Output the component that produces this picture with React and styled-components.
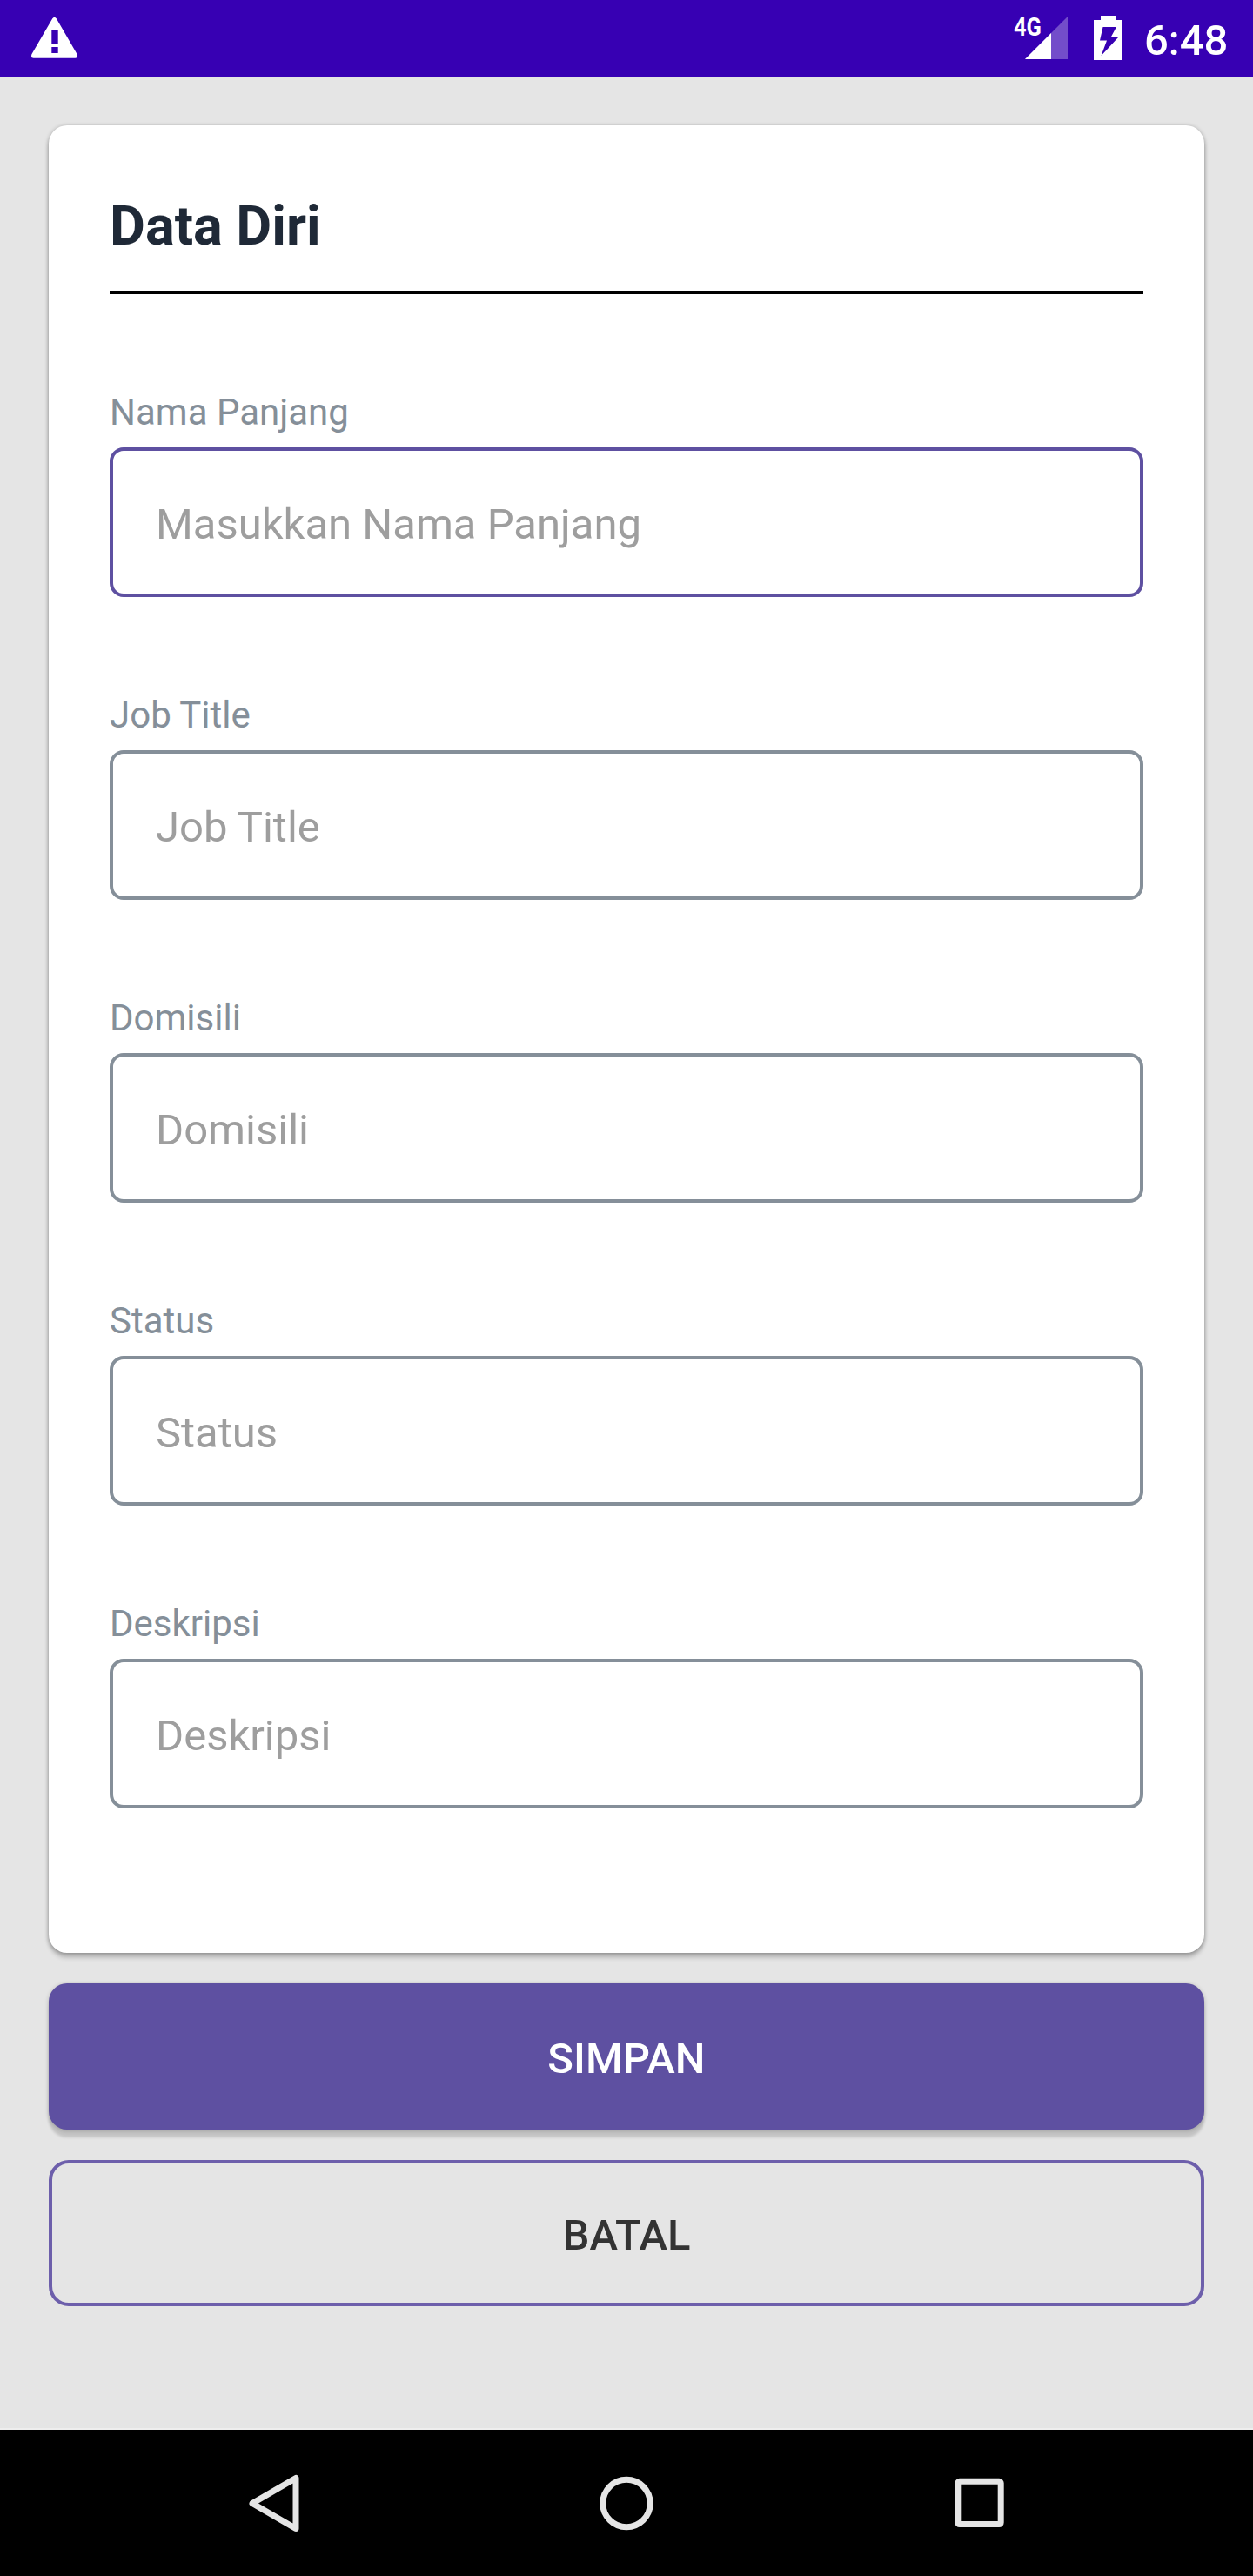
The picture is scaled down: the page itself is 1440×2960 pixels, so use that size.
import React from "react";
import styled, { createGlobalStyle } from "styled-components";

const GlobalStyle = createGlobalStyle`
  *, *::before, *::after { box-sizing: border-box; }
  body { margin: 0; background: #e5e5e5; font-family: Roboto, "Noto Sans", sans-serif; }
`;

const Screen = styled.div`
  display: flex;
  flex-direction: column;
  width: 1440px;
  height: 2960px;
  background: #e5e5e5;
`;

const StatusBar = styled.header`
  display: flex;
  justify-content: space-between;
  align-items: flex-start;
  height: 88px;
  padding: 0 28px 0 36px;
  background: #3700b3;
  color: #fff;
`;

const WarningIcon = styled.svg`
  display: block;
  margin-top: 19px;
`;

const StatusIcons = styled.div`
  display: flex;
  align-items: flex-start;
`;

const NetworkLabel = styled.span`
  width: 30px;
  margin: 17px -17px 0 0;
  font-size: 29.5px;
  line-height: 28px;
  font-weight: 700;
  white-space: nowrap;
  transform: scaleX(0.86);
  transform-origin: left;
`;

const SignalIcon = styled.svg`
  display: block;
  margin: 19px 30px 0 0;
`;

const BatteryIcon = styled.svg`
  display: block;
  margin: 18px 25px 0 0;
`;

const Clock = styled.time`
  width: 97px;
  height: 88px;
  font-size: 49px;
  line-height: 93px;
  font-weight: 500;
  white-space: nowrap;
`;

const Content = styled.main`
  display: flex;
  flex-direction: column;
  gap: 35px;
  flex: 1;
  padding: 56px 56px 0;
  border-bottom: 2px solid #eee;
`;

const Card = styled.section`
  height: 2100px;
  padding: 70px;
  border-radius: 21px;
  background: #fff;
  box-shadow: 0 6px 5px rgba(0, 0, 0, 0.16), 0 1px 5px rgba(0, 0, 0, 0.32);
`;

const Title = styled.h1`
  height: 124px;
  margin: 0 0 104px;
  border-bottom: 4px solid #000;
  font-size: 63px;
  line-height: 91px;
  font-weight: 700;
  color: #1f2937;
`;

const Fields = styled.form`
  display: flex;
  flex-direction: column;
  gap: 104px;
`;

const Field = styled.label`
  display: flex;
  flex-direction: column;
`;

const FieldLabel = styled.span`
  height: 72px;
  font-size: 42px;
  line-height: 63px;
  color: #858f99;
`;

const TextInput = styled.input`
  height: 172px;
  padding: 5px 49px 0;
  border: 4px solid ${(p) => (p.$active ? "#5e50a1" : "#858f99")};
  border-radius: 16px;
  outline: none;
  background: transparent;
  font-family: inherit;
  font-size: 49px;
  color: #333;
  &::placeholder { color: #9e9e9e; opacity: 1; }
`;

const Button = styled.button`
  flex: none;
  height: 168px;
  padding: 5px 0 0;
  border: ${(p) => (p.$outlined ? "4px solid #6d5fab" : "0")};
  border-radius: ${(p) => (p.$outlined ? "23px" : "21px")};
  background: ${(p) => (p.$outlined ? "transparent" : "#5e50a1")};
  box-shadow: ${(p) =>
    p.$outlined ? "none" : "0 9px 3px rgba(0, 0, 0, 0.14), 0 1px 5px rgba(0, 0, 0, 0.22)"};
  font-family: inherit;
  font-size: 49px;
  font-weight: 500;
  color: ${(p) => (p.$outlined ? "#333" : "#fff")};
`;

const NavBar = styled.nav`
  display: flex;
  justify-content: space-between;
  align-items: center;
  height: 168px;
  padding: 0 275px;
  background: #000;
`;

const NavIcon = styled.svg`
  display: block;
  width: 80px;
  height: 80px;
  fill: none;
  stroke: #e5e5e5;
  stroke-width: 7;
  stroke-linejoin: round;
`;

const FIELDS = [
  { label: "Nama Panjang", placeholder: "Masukkan Nama Panjang", active: true },
  { label: "Job Title", placeholder: "Job Title" },
  { label: "Domisili", placeholder: "Domisili" },
  { label: "Status", placeholder: "Status" },
  { label: "Deskripsi", placeholder: "Deskripsi" },
];

export default function App() {
  return (
    <Screen>
      <GlobalStyle />
      <StatusBar>
        <WarningIcon width="53" height="48" viewBox="0 0 53 48">
          <path
            fill="#fff"
            fillRule="evenodd"
            d="M24.3 2.2Q26.5-.8 28.8 2.2L52.6 43.2Q54 47.8 50.5 47.8H2.5Q-1 47.8.4 43.2ZM23.3 16V31H30.7V16ZM23.3 35V42H30.7V35Z"
          />
        </WarningIcon>
        <StatusIcons>
          <NetworkLabel>4G</NetworkLabel>
          <SignalIcon width="49" height="49" viewBox="0 0 49 49" fill="#fff">
            <path d="M0 49L49 0V49Z" opacity="0.3" />
            <path d="M0 49L30 19V49Z" />
          </SignalIcon>
          <BatteryIcon width="33" height="51" viewBox="0 0 33 51">
            <path
              fill="#fff"
              fillRule="evenodd"
              d="M8 0H25V5H33V51H0V5H8ZM10.500 13H26L19.500 25H28L8.500 46L15 28.500H7Z"
            />
          </BatteryIcon>
          <Clock>6:48</Clock>
        </StatusIcons>
      </StatusBar>
      <Content>
        <Card>
          <Title>Data Diri</Title>
          <Fields>
            {FIELDS.map((f) => (
              <Field key={f.label}>
                <FieldLabel>{f.label}</FieldLabel>
                <TextInput placeholder={f.placeholder} $active={f.active} />
              </Field>
            ))}
          </Fields>
        </Card>
        <Button type="button">SIMPAN</Button>
        <Button type="button" $outlined>BATAL</Button>
      </Content>
      <NavBar>
        <NavIcon viewBox="0 0 80 80">
          <path d="M65 11.5V69.5L15 40.5Z" />
        </NavIcon>
        <NavIcon viewBox="0 0 80 80">
          <circle cx="40" cy="40.5" r="27.2" />
        </NavIcon>
        <NavIcon viewBox="0 0 80 80">
          <rect x="15.8" y="15.3" width="49.4" height="49.2" rx="2" />
        </NavIcon>
      </NavBar>
    </Screen>
  );
}
